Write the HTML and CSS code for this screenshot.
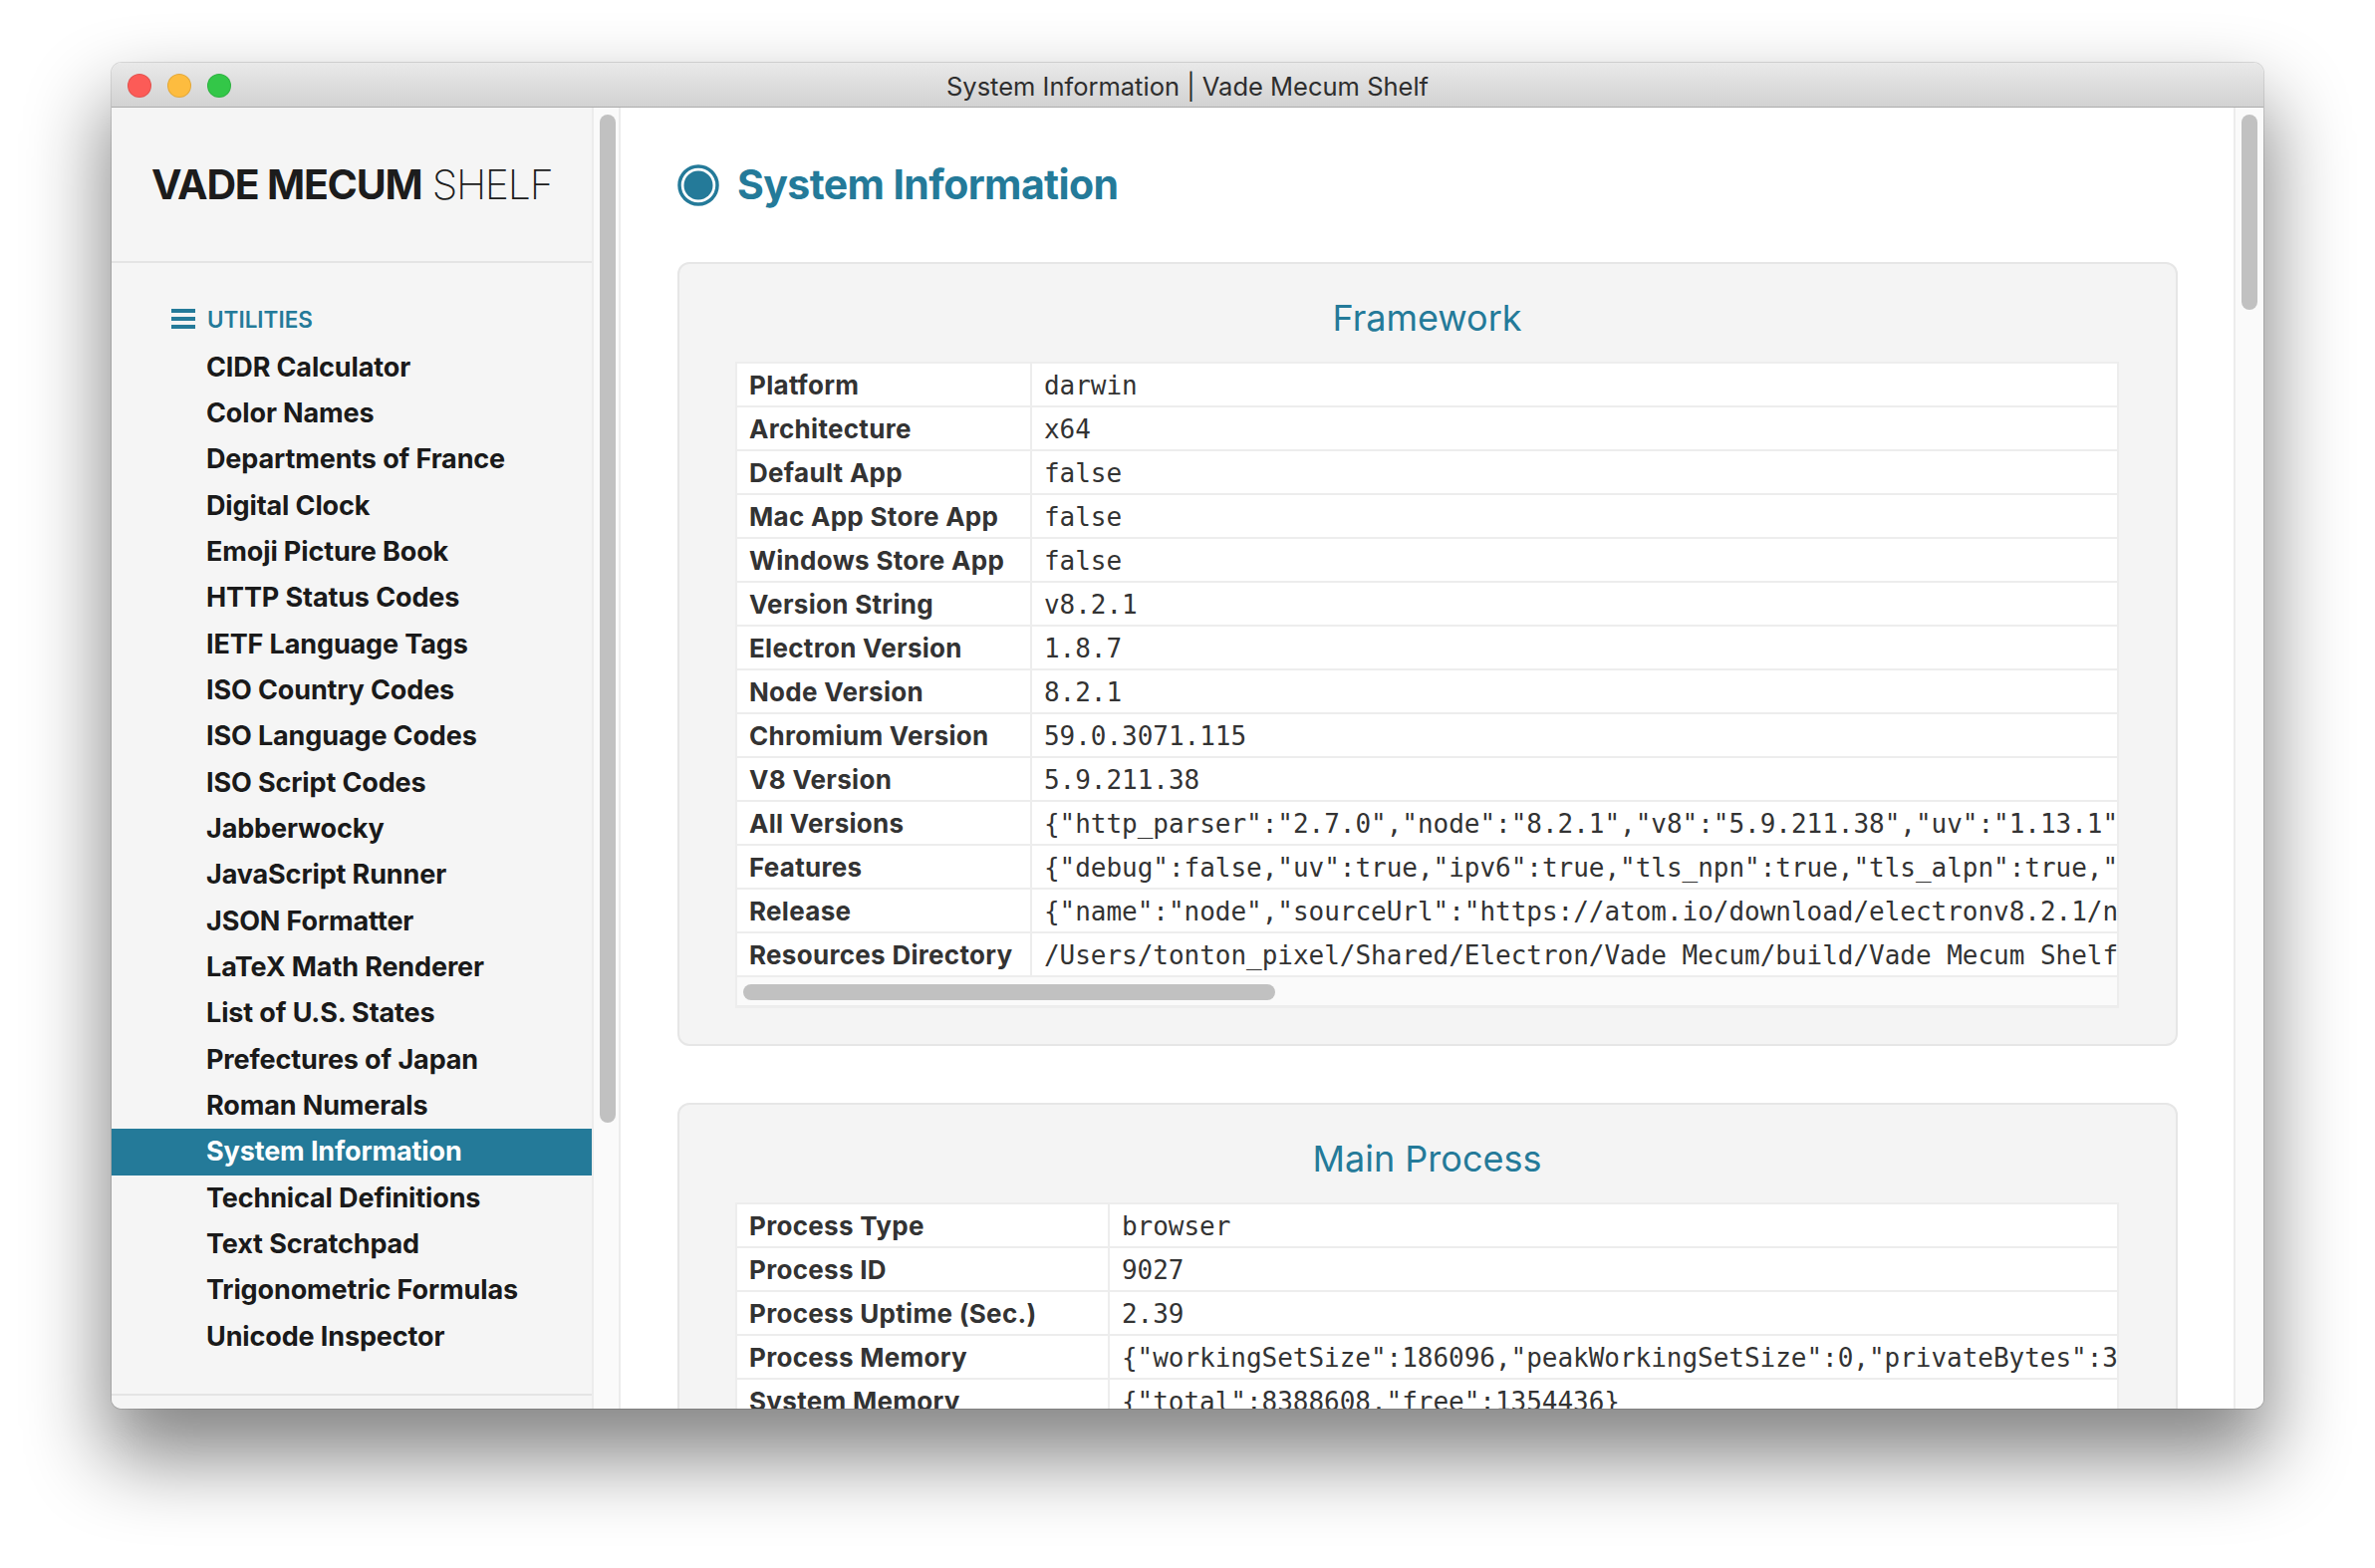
FILE: index.html
```html
<!DOCTYPE html>
<html lang="en">
<head>
    <meta charset="UTF-8">
    <title>System Information | Vade Mecum Shelf</title>
    <link rel="stylesheet" href="styles.css">
</head>
<body>
    <div class="window">
        <div class="titlebar">
            <div class="lights">
                <span class="light red"></span>
                <span class="light yellow"></span>
                <span class="light green"></span>
            </div>
            <div class="title">System Information | Vade Mecum Shelf</div>
        </div>
        <div class="app">
            <div class="sidebar">
                <div class="logo"><b>VADE MECUM</b> SHELF</div>
                <div class="nav">
                    <div class="nav-head">
                        <svg class="menu-icon" viewBox="0 0 24 20"><path d="M0 0h24v4H0zM0 8h24v4H0zM0 16h24v4H0z"/></svg>
                        <span>UTILITIES</span>
                    </div>
                    <ul class="nav-list">
                        <li>CIDR Calculator</li>
                        <li>Color Names</li>
                        <li>Departments of France</li>
                        <li>Digital Clock</li>
                        <li>Emoji Picture Book</li>
                        <li>HTTP Status Codes</li>
                        <li>IETF Language Tags</li>
                        <li>ISO Country Codes</li>
                        <li>ISO Language Codes</li>
                        <li>ISO Script Codes</li>
                        <li>Jabberwocky</li>
                        <li>JavaScript Runner</li>
                        <li>JSON Formatter</li>
                        <li>LaTeX Math Renderer</li>
                        <li>List of U.S. States</li>
                        <li>Prefectures of Japan</li>
                        <li>Roman Numerals</li>
                        <li class="active">System Information</li>
                        <li>Technical Definitions</li>
                        <li>Text Scratchpad</li>
                        <li>Trigonometric Formulas</li>
                        <li>Unicode Inspector</li>
                    </ul>
                </div>
                <div class="sidebar-foot"></div>
            </div>
            <div class="gutter"><div class="thumb thumb-side"></div></div>
            <div class="content">
                <h1>
                    <svg class="radio-icon" viewBox="0 0 42 42"><circle cx="21" cy="21" r="19" fill="none" stroke="#247a99" stroke-width="3.5"/><circle cx="21" cy="21" r="14.5" fill="#247a99"/></svg>
                    <span class="page-title">System Information</span>
                </h1>
                <div class="card">
                    <h2>Framework</h2>
                    <div class="table-wrap">
                        <table class="info framework">
                            <tr><th>Platform</th><td><div>darwin</div></td></tr>
                            <tr><th>Architecture</th><td><div>x64</div></td></tr>
                            <tr><th>Default App</th><td><div>false</div></td></tr>
                            <tr><th>Mac App Store App</th><td><div>false</div></td></tr>
                            <tr><th>Windows Store App</th><td><div>false</div></td></tr>
                            <tr><th>Version String</th><td><div>v8.2.1</div></td></tr>
                            <tr><th>Electron Version</th><td><div>1.8.7</div></td></tr>
                            <tr><th>Node Version</th><td><div>8.2.1</div></td></tr>
                            <tr><th>Chromium Version</th><td><div>59.0.3071.115</div></td></tr>
                            <tr><th>V8 Version</th><td><div>5.9.211.38</div></td></tr>
                            <tr><th>All Versions</th><td><div>{"http_parser":"2.7.0","node":"8.2.1","v8":"5.9.211.38","uv":"1.13.1","zlib":"1.2.11"}</div></td></tr>
                            <tr><th>Features</th><td><div>{"debug":false,"uv":true,"ipv6":true,"tls_npn":true,"tls_alpn":true,"tls_sni":true}</div></td></tr>
                            <tr><th>Release</th><td><div>{"name":"node","sourceUrl":"https://atom.io/download/electronv8.2.1/node-v8.2.1.tar.gz"}</div></td></tr>
                            <tr><th>Resources Directory</th><td><div>/Users/tonton_pixel/Shared/Electron/Vade Mecum/build/Vade Mecum Shelf-darwin-x64</div></td></tr>
                        </table>
                        <div class="hscroll"><div class="thumb thumb-h"></div></div>
                    </div>
                </div>
                <div class="card">
                    <h2>Main Process</h2>
                    <div class="table-wrap">
                        <table class="info process">
                            <tr><th>Process Type</th><td><div>browser</div></td></tr>
                            <tr><th>Process ID</th><td><div>9027</div></td></tr>
                            <tr><th>Process Uptime (Sec.)</th><td><div>2.39</div></td></tr>
                            <tr><th>Process Memory</th><td><div>{"workingSetSize":186096,"peakWorkingSetSize":0,"privateBytes":34}</div></td></tr>
                            <tr><th>System Memory</th><td><div>{"total":8388608,"free":1354436}</div></td></tr>
                        </table>
                    </div>
                </div>
            </div>
            <div class="gutter gutter-main"><div class="thumb thumb-main"></div></div>
        </div>
    </div>
</body>
</html>
```

FILE: styles.css
```css
html, body { margin: 0; padding: 0; height: 100%; background: #fff; overflow: hidden; }
body { padding: 63px 112px 0 112px; box-sizing: border-box; height: 1574px; font-family: Inter, "Noto Sans", sans-serif; color: #1a1a1a; }

.window { width: 2160px; height: 1351px; display: flex; flex-direction: column; border-radius: 10px; overflow: hidden; background: #fff; box-shadow: 0 0 0 1px rgba(0,0,0,0.12), 0 44px 80px 6px rgba(0,0,0,0.48); }

.titlebar { height: 44px; flex: none; display: flex; align-items: center; justify-content: center; background: linear-gradient(#e9e9e9, #d2d2d2); border-bottom: 1px solid #acacac; position: relative; }
.lights { position: absolute; left: 16px; top: 11px; display: flex; gap: 16px; }
.light { width: 24px; height: 24px; border-radius: 50%; box-sizing: border-box; border: 1px solid rgba(0,0,0,0.1); }
.red { background: #fc5b57; }
.yellow { background: #fdbc3f; }
.green { background: #33c748; }
.title { font-size: 25.5px; color: #2e2e2e; padding-top: 2px; }

.app { flex: 1; display: flex; min-height: 0; }

.sidebar { width: 482px; flex: none; display: flex; flex-direction: column; background: #f5f5f5; }
.logo { height: 156px; flex: none; box-sizing: border-box; padding: 55px 0 0 40px; font-size: 41px; line-height: 44px; letter-spacing: -1.25px; font-weight: 200; border-bottom: 2px solid #e4e4e4; white-space: nowrap; color: #1c1c1c; }
.logo b { font-weight: 700; }
.nav { flex: 1; min-height: 0; padding-top: 40px; }
.nav-head { display: flex; align-items: center; gap: 12px; height: 32px; padding-left: 60px; color: #247a99; font-size: 22.5px; font-weight: 600; }
.menu-icon { width: 24px; height: 20px; fill: #247a99; }
.nav-list { list-style: none; margin: 9.5px 0 0; padding: 0; }
.nav-list li { height: 46.35px; line-height: 46px; padding-left: 95px; font-size: 27px; font-weight: 700; letter-spacing: -0.13px; white-space: nowrap; }
.nav-list li.active { background: #247a99; color: #fff; }
.sidebar-foot { height: 13px; flex: none; border-top: 2px solid #e4e4e4; }

.gutter { width: 29px; flex: none; box-sizing: border-box; background: #fafafa; border-left: 2px solid #ececec; border-right: 2px solid #ececec; padding: 7px 0 0 6px; }
.gutter-main { width: 30px; border-right: 0; padding-left: 6px; }
.thumb { background: #c1c1c1; border-radius: 8px; }
.thumb-side { width: 16px; height: 1012px; }
.thumb-main { width: 16px; height: 196px; }

.content { flex: 1; min-width: 0; overflow: hidden; padding: 57px 56px 0 57px; background: #fff; }
h1 { margin: 0 0 56px; height: 42px; display: flex; align-items: center; gap: 18px; font-size: 41px; font-weight: 700; letter-spacing: -0.6px; color: #247a99; white-space: nowrap; }
.page-title { margin-top: -2px; }
.radio-icon { width: 42px; height: 42px; flex: none; }

.card { background: #f4f4f4; border: 2px solid #e6e6e6; border-radius: 12px; padding: 0 57px 36px 56px; margin-bottom: 57px; }
h2 { margin: 0; height: 98px; padding-top: 30px; box-sizing: border-box; text-align: center; font-size: 36px; line-height: 48px; font-weight: 400; color: #247a99; }

.table-wrap { border: 2px solid #ededed; border-bottom-width: 3px; background: #fff; overflow: hidden; }
.info { width: 100%; border-collapse: collapse; table-layout: fixed; }
.info tr { height: 42px; }
.info tr + tr th, .info tr + tr td { border-top: 2px solid #ededed; }
.info th, .info td { padding: 0; height: 42px; font-size: 26px; white-space: nowrap; color: #333; }
.info th { text-align: left; padding-left: 12px; font-weight: 700; letter-spacing: 0.3px; border-right: 2px solid #ededed; overflow: hidden; }
.info td { font-family: "DejaVu Sans Mono", monospace; font-weight: 400; overflow: hidden; letter-spacing: -0.03px; }
.info td div { padding: 1px 0 0 12px; overflow: hidden; }
.framework th { width: 282px; }
.process th { width: 360px; }

.hscroll { height: 30px; background: #fafafa; border-top: 2px solid #ededed; padding: 7px 0 0 6px; box-sizing: border-box; }
.thumb-h { width: 534px; height: 16px; }
```
